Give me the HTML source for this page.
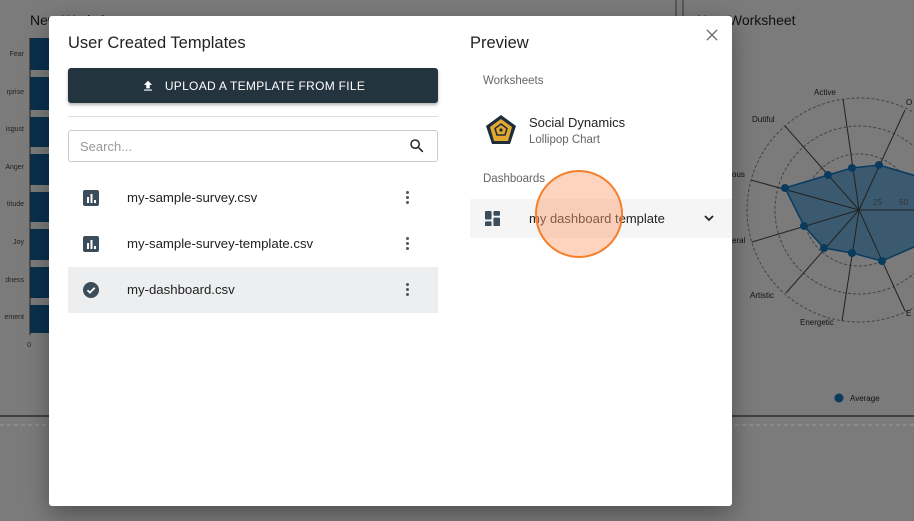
<!DOCTYPE html>
<html><head><meta charset="utf-8"><style>
*{box-sizing:border-box;margin:0;padding:0}
body{width:914px;height:521px;overflow:hidden;background:#7b7b7b;font-family:"Liberation Sans",Arial,sans-serif;position:relative}
.bg{position:absolute;left:0;top:0}
.modal{position:absolute;left:49px;top:16px;width:683px;height:490px;background:#fff;border-radius:3px;box-shadow:0 8px 24px rgba(0,0,0,.35)}
.h{position:absolute;font-size:16.5px;color:#222}
.btn{position:absolute;left:19px;top:52px;width:370px;height:35px;background:#24343f;border-radius:3px;color:#fff;font-size:12px;letter-spacing:.3px;display:flex;align-items:center;justify-content:center;box-shadow:0 2px 3px rgba(0,0,0,.3)}
.hr{position:absolute;left:19px;top:100px;width:370px;height:1px;background:#ddd}
.search{position:absolute;left:19px;top:114px;width:370px;height:32px;border:1px solid #ccc;border-radius:3px;font-size:13px;color:#999;padding:8px 0 0 11px}
.row{position:absolute;left:19px;width:370px;height:46px;font-size:13.2px;color:#222}
.row .t{position:absolute;left:59px;top:15px}
.row .ic{position:absolute;left:15px;top:15px;width:16px;height:16px}
.row .dots{position:absolute;left:338px;top:16px;width:4px}
.dots i{display:block;width:3px;height:3px;background:#555;border-radius:50%;margin-bottom:2px}
.sub{position:absolute;font-size:11.5px;color:#666}
</style></head><body>
<svg class="bg" width="914" height="521">
 <text x="30" y="25" font-size="14" fill="#111">New Worksheet</text>
 <rect x="30" y="38" width="20" height="295" fill="#0a304d"/>
 <g fill="#7b7b7b"><rect x="30" y="70" width="20" height="7"/><rect x="30" y="110" width="20" height="7"/><rect x="30" y="147" width="20" height="7"/><rect x="30" y="185" width="20" height="7"/><rect x="30" y="222" width="20" height="7"/><rect x="30" y="260" width="20" height="7"/><rect x="30" y="298" width="20" height="7"/></g>
 <g font-size="7" fill="#222" text-anchor="end"><text x="24" y="56">Fear</text><text x="24" y="94">rprise</text><text x="24" y="131">isgust</text><text x="24" y="169">Anger</text><text x="24" y="206">titude</text><text x="24" y="244">Joy</text><text x="24" y="282">dness</text><text x="24" y="319">ement</text><text x="31" y="347">0</text></g>
 <line x1="30" y1="38" x2="30" y2="335" stroke="#222"/>
 <line x1="676" y1="0" x2="676" y2="20" stroke="#333"/><line x1="683" y1="0" x2="683" y2="20" stroke="#333"/>
 <text x="697" y="25" font-size="14" fill="#111">New Worksheet</text>
 <g fill="none" stroke="#444" stroke-dasharray="3 2"><circle cx="859" cy="210" r="28"/><circle cx="859" cy="210" r="56"/><circle cx="859" cy="210" r="84"/><circle cx="859" cy="210" r="112"/></g>
 <polygon points="852,168 879,165 930,180 930,240 882,261 852,253 824,248 804,226 785,188 828,175" fill="#3b5a70" stroke="#0a3b5f" stroke-width="1.5"/>
 <g stroke="#222"><line x1="859" y1="210" x2="843" y2="99"/><line x1="859" y1="210" x2="785" y2="126"/><line x1="859" y1="210" x2="751" y2="180"/><line x1="859" y1="210" x2="752" y2="242"/><line x1="859" y1="210" x2="786" y2="293"/><line x1="859" y1="210" x2="842" y2="321"/><line x1="859" y1="210" x2="905" y2="311"/><line x1="859" y1="210" x2="905" y2="110"/><line x1="859" y1="210" x2="914" y2="210"/></g>
 <g fill="#0a3b5f"><circle cx="852" cy="168" r="4"/><circle cx="879" cy="165" r="4"/><circle cx="828" cy="175" r="4"/><circle cx="785" cy="188" r="4"/><circle cx="804" cy="226" r="4"/><circle cx="824" cy="248" r="4"/><circle cx="852" cy="253" r="4"/><circle cx="882" cy="261" r="4"/></g>
 <g font-size="8" fill="#111"><text x="814" y="95">Active</text><text x="752" y="122">Dutiful</text><text x="732" y="177">ous</text><text x="732" y="243">eral</text><text x="750" y="298">Artistic</text><text x="800" y="325">Energetic</text><text x="906" y="105">O</text><text x="906" y="316">E</text><text x="873" y="205" fill="#333">25</text><text x="899" y="205" fill="#333">50</text></g>
 <circle cx="839" cy="398" r="4.5" fill="#0a3b5f"/><text x="850" y="401" font-size="8" fill="#111">Average</text>
 <line x1="0" y1="416" x2="914" y2="416" stroke="#2a2f33" stroke-width="1.5"/>
 <line x1="0" y1="425" x2="914" y2="425" stroke="#999" stroke-dasharray="4 3"/>
</svg>
<div class="modal">
 <div class="h" style="left:19px;top:18px">User Created Templates</div>
 <div class="btn"><svg width="14" height="14" viewBox="0 0 24 24" style="margin-right:10px"><path d="M9 16h6v-6h4l-7-7-7 7h4zm-4 2h14v2H5z" fill="#fff"/></svg>UPLOAD A TEMPLATE FROM FILE</div>
 <div class="hr"></div>
 <div class="search">Search...<svg width="18" height="18" viewBox="0 0 24 24" style="position:absolute;right:11px;top:6px"><path d="M15.5 14h-.79l-.28-.27A6.47 6.47 0 0016 9.5 6.5 6.5 0 109.5 16c1.61 0 3.09-.59 4.23-1.57l.27.28v.79l5 4.99L20.49 19l-4.99-5zm-6 0C7.01 14 5 11.99 5 9.5S7.01 5 9.5 5 14 7.01 14 9.5 11.99 14 9.5 14z" fill="#222"/></svg></div>
 <div class="row" style="top:159px"><svg class="ic" viewBox="0 0 16 16"><rect width="16" height="16" rx="2" fill="#3b4d5a"/><rect x="4" y="7" width="2" height="6" fill="#fff"/><rect x="7.5" y="4" width="2" height="9" fill="#fff"/><rect x="11" y="10" width="2" height="3" fill="#fff"/></svg><span class="t">my-sample-survey.csv</span><div class="dots"><i></i><i></i><i></i></div></div>
 <div class="row" style="top:205px"><svg class="ic" viewBox="0 0 16 16"><rect width="16" height="16" rx="2" fill="#3b4d5a"/><rect x="4" y="7" width="2" height="6" fill="#fff"/><rect x="7.5" y="4" width="2" height="9" fill="#fff"/><rect x="11" y="10" width="2" height="3" fill="#fff"/></svg><span class="t">my-sample-survey-template.csv</span><div class="dots"><i></i><i></i><i></i></div></div>
 <div class="row" style="top:251px;background:#eceef0"><svg class="ic" viewBox="0 0 16 16"><circle cx="8" cy="8" r="8" fill="#3b4d5a"/><path d="M4.5 8.2l2.4 2.4 4.8-4.8" stroke="#fff" stroke-width="1.8" fill="none"/></svg><span class="t">my-dashboard.csv</span><div class="dots"><i></i><i></i><i></i></div></div>

 <div class="h" style="left:421px;top:18px">Preview</div>
 <svg style="position:absolute;left:657px;top:13px" width="12" height="12" viewBox="0 0 14 14"><path d="M1 1l12 12M13 1L1 13" stroke="#666" stroke-width="1.5"/></svg>
 <div class="sub" style="left:434px;top:59px">Worksheets</div>
 <svg style="position:absolute;left:436px;top:98px" width="32" height="32" viewBox="0 0 32 32"><polygon points="16,1 31,12 25,30 7,30 1,12" fill="#1f2d3a"/><polygon points="16,5 27,13 23,27 9,27 5,13" fill="#e3a830"/><polygon points="16,10 22,14.5 20,21 12,21 10,14.5" fill="none" stroke="#1f2d3a" stroke-width="1.5"/><circle cx="16" cy="16" r="1.6" fill="#1f2d3a"/></svg>
 <div style="position:absolute;left:480px;top:99px;font-size:13px;color:#222">Social Dynamics</div>
 <div class="sub" style="left:480px;top:118px">Lollipop Chart</div>
 <div class="sub" style="left:434px;top:157px">Dashboards</div>
 <div style="position:absolute;left:421px;top:183px;width:262px;height:39px;background:#f5f5f5">
  <svg style="position:absolute;left:15px;top:12px" width="15" height="15" viewBox="0 0 16 16" fill="#3b4d5a"><rect x="0" y="0" width="7" height="9" rx="1"/><rect x="9" y="0" width="7" height="5" rx="1"/><rect x="0" y="11" width="7" height="5" rx="1"/><rect x="9" y="7" width="7" height="9" rx="1"/></svg>
  <div style="position:absolute;left:59px;top:12px;font-size:13px;color:#222">my dashboard template</div>
  <svg style="position:absolute;left:233px;top:14px" width="12" height="10" viewBox="0 0 12 10"><path d="M2 3l4 4 4-4" stroke="#222" stroke-width="1.8" fill="none"/></svg>
 </div>
 <div style="position:absolute;left:486px;top:154px;width:88px;height:88px;border-radius:50%;background:rgba(255,160,110,.45);border:2px solid #f57f2a"></div>
</div>
</body></html>
